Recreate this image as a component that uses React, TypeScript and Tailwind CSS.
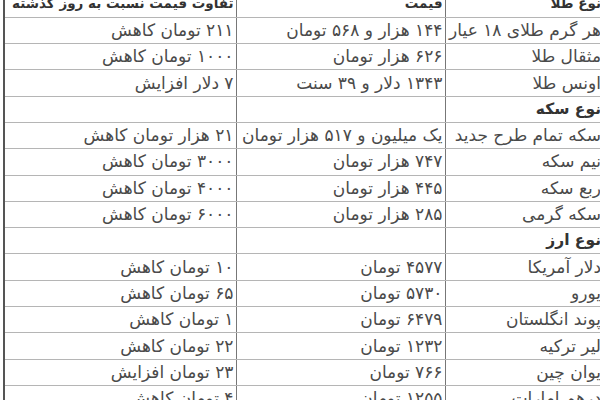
import React from "react"

type Row = { name: string; price?: string; diff?: string; group?: boolean }

const rows: Row[] = [
  { name: "هر گرم طلای ۱۸ عیار", price: "۱۴۴ هزار و ۵۶۸ تومان", diff: "۲۱۱ تومان کاهش" },
  { name: "مثقال طلا", price: "۶۲۶ هزار تومان", diff: "۱۰۰۰ تومان کاهش" },
  { name: "اونس طلا", price: "۱۳۴۳ دلار و ۳۹ سنت", diff: "۷ دلار افزایش" },
  { name: "نوع سکه", group: true },
  { name: "سکه تمام طرح جدید", price: "یک میلیون و ۵۱۷ هزار تومان", diff: "۲۱ هزار تومان کاهش" },
  { name: "نیم سکه", price: "۷۴۷ هزار تومان", diff: "۳۰۰۰ تومان کاهش" },
  { name: "ربع سکه", price: "۴۴۵ هزار تومان", diff: "۴۰۰۰ تومان کاهش" },
  { name: "سکه گرمی", price: "۲۸۵ هزار تومان", diff: "۶۰۰۰ تومان کاهش" },
  { name: "نوع ارز", group: true },
  { name: "دلار آمریکا", price: "۴۵۷۷ تومان", diff: "۱۰ تومان کاهش" },
  { name: "یورو", price: "۵۷۳۰ تومان", diff: "۶۵ تومان کاهش" },
  { name: "پوند انگلستان", price: "۶۴۷۹ تومان", diff: "۱ تومان کاهش" },
  { name: "لیر ترکیه", price: "۱۲۳۲ تومان", diff: "۲۲ تومان کاهش" },
  { name: "یوان چین", price: "۷۶۶ تومان", diff: "۲۳ تومان افزایش" },
  { name: "درهم امارات", price: "۱۲۵۵ تومان", diff: "۴ تومان کاهش" },
]

const cell = "h-[26.3px] p-0 pr-[2px] text-right align-middle whitespace-nowrap overflow-hidden border-b border-[#b5b5b5]"
const line = " border-r border-r-[#777]"

export default function App() {
  return (
    <div className="flex w-[600px] h-[400px] overflow-hidden bg-white pl-[3px]">
      <div className="w-[2px] shrink-0 bg-[#555]" />
      <div className="mt-[-9px] w-[598px] shrink-0 self-start">
        <table
          dir="rtl"
          className="table-fixed border-collapse w-full text-[#4a4a4a] text-[17px] leading-none"
          style={{ fontFamily: '"DejaVu Sans", sans-serif' }}
        >
          <colgroup>
            <col className="w-[158px]" />
            <col className="w-[209px]" />
            <col className="w-[231px]" />
          </colgroup>
          <thead>
            <tr className="text-[#333] text-[13.5px]">
              <th className={cell + " font-bold"}>نوع طلا</th>
              <th className={cell + " font-bold" + line}>قیمت</th>
              <th className={cell + " font-bold" + line}>تفاوت قیمت نسبت به روز گذشته</th>
            </tr>
          </thead>
          <tbody>
            {rows.map((r, i) => (
              <tr key={i}>
                <td className={cell + (r.group ? " font-bold text-[#333] text-[15.5px]" : "")}>{r.name}</td>
                <td className={cell + line}>{r.price ?? ""}</td>
                <td className={cell + line}>{r.diff ?? ""}</td>
              </tr>
            ))}
          </tbody>
        </table>
      </div>
    </div>
  )
}
